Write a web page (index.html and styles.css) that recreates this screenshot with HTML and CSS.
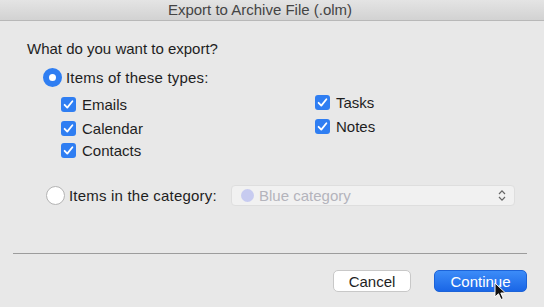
FILE: index.html
```html
<!DOCTYPE html>
<html lang="en">
<head>
    <meta charset="UTF-8">
    <title>Export to Archive File (.olm)</title>
    <link rel="stylesheet" href="styles.css">
</head>
<body>
    <div class="window">
        <div class="titlebar">Export to Archive File (.olm)</div>

        <div class="content">
            <p class="question">What do you want to export?</p>

            <label class="radio-row first">
                <span class="radio checked"></span>
                <span>Items of these types:</span>
            </label>

            <div class="types">
                <div class="type-col">
                    <label class="check-row"><span class="checkbox"></span>Emails</label>
                    <label class="check-row"><span class="checkbox"></span>Calendar</label>
                    <label class="check-row"><span class="checkbox"></span>Contacts</label>
                </div>
                <div class="type-col right">
                    <label class="check-row"><span class="checkbox"></span>Tasks</label>
                    <label class="check-row"><span class="checkbox"></span>Notes</label>
                </div>
            </div>

            <div class="radio-row second">
                <span class="radio"></span>
                <span class="cat-label">Items in the category:</span>
                <div class="popup">
                    <span class="dot"></span>
                    <span class="popup-text">Blue category</span>
                    <svg class="chevrons" width="8" height="13" viewBox="0 0 8 13">
                        <path d="M1 5 L4 1.8 L7 5 M1 8 L4 11.2 L7 8" fill="none" stroke="#666" stroke-width="1.2"/>
                    </svg>
                </div>
            </div>
        </div>

        <div class="separator"></div>

        <div class="buttons">
            <button class="btn cancel">Cancel</button>
            <button class="btn primary">Continue</button>
        </div>

        <svg class="cursor" width="14" height="20" viewBox="0 0 14 20">
            <path d="M1 1 L1 15 L4.5 11.8 L7 17.5 L9.3 16.5 L6.8 11 L11.5 11 Z" fill="#111" stroke="#fff" stroke-width="1"/>
        </svg>
    </div>
</body>
</html>
```

FILE: styles.css
```css
body {
    margin: 0;
    font-family: "Liberation Sans", Arial, sans-serif;
    background-color: #e8e8e8;
    color: #1e1e1e;
}

.window {
    position: relative;
    width: 544px;
    height: 307px;
    background-color: #e8e8e8;
    overflow: hidden;
}

.titlebar {
    height: 20px;
    line-height: 20px;
    text-align: center;
    padding-right: 24px;
    font-size: 15px;
    color: #444;
    background: linear-gradient(#e4e4e4, #d2d2d2);
    border-bottom: 1px solid #b8b8b8;
}

.content {
    padding: 0 0 0 27px;
}

.question {
    margin: 0;
    padding-top: 19px;
    font-size: 15px;
    line-height: 18px;
}

.radio-row {
    display: flex;
    align-items: center;
    font-size: 15px;
}

.radio-row.first {
    margin: 10px 0 0 16px;
    letter-spacing: 0.2px;
}

.radio {
    width: 19px;
    height: 19px;
    box-sizing: border-box;
    border-radius: 50%;
    background: #fff;
    border: 1px solid #b4b4b4;
    margin-right: 4px;
    flex: none;
}

.radio.checked {
    background: #fff;
    border: 6px solid #2f7ef2;
}

.types {
    display: flex;
    margin: 6px 0 0 34px;
}

.type-col {
    display: flex;
    flex-direction: column;
    width: 254px;
    flex: none;
}

.type-col.right {
    width: auto;
    flex: 1;
    margin-top: -2px;
}

.check-row {
    display: flex;
    align-items: center;
    height: 22px;
    font-size: 15px;
}

.type-col .check-row:nth-child(2) {
    margin-top: 2px;
}

.checkbox {
    width: 15px;
    height: 15px;
    border-radius: 3px;
    background-color: #2f7ef2;
    margin-right: 6px;
    flex: none;
    background-image: url("data:image/svg+xml,%3Csvg xmlns='http://www.w3.org/2000/svg' viewBox='0 0 15 15'%3E%3Cpath d='M3.6 7.8 L6.3 10.6 L11.4 4.2' fill='none' stroke='white' stroke-width='1.8' stroke-linecap='round' stroke-linejoin='round'/%3E%3C/svg%3E");
}

.radio-row.second {
    margin: 24px 0 0 19px;
}

.cat-label {
    width: 162px;
    letter-spacing: 0.2px;
}

.popup {
    display: flex;
    align-items: center;
    width: 284px;
    height: 21px;
    box-sizing: border-box;
    padding: 0 8px 0 9px;
    background: #f1f1f1;
    border: 1px solid #dedede;
    border-radius: 4px;
}

.dot {
    width: 13px;
    height: 13px;
    border-radius: 50%;
    background: #c7cbf0;
    margin-right: 5px;
}

.popup-text {
    flex: 1;
    font-size: 15px;
    color: #b4b4bc;
}

.separator {
    margin: 47px 17px 0 13px;
    height: 1px;
    background: #9c9c9c;
}

.buttons {
    display: flex;
    justify-content: flex-end;
    gap: 23px;
    margin: 16px 17px 0 0;
}

.btn {
    height: 22px;
    font-family: inherit;
    font-size: 15px;
    border-radius: 5px;
    padding: 0;
}

.cancel {
    width: 78px;
    background: #fff;
    border: 1px solid #c8c8c8;
    color: #1e1e1e;
}

.primary {
    width: 93px;
    background: linear-gradient(#3c8cf8, #1a66e6);
    border: 1px solid #1c63d8;
    color: #fff;
}

.cursor {
    position: absolute;
    left: 494px;
    top: 282px;
}
```
